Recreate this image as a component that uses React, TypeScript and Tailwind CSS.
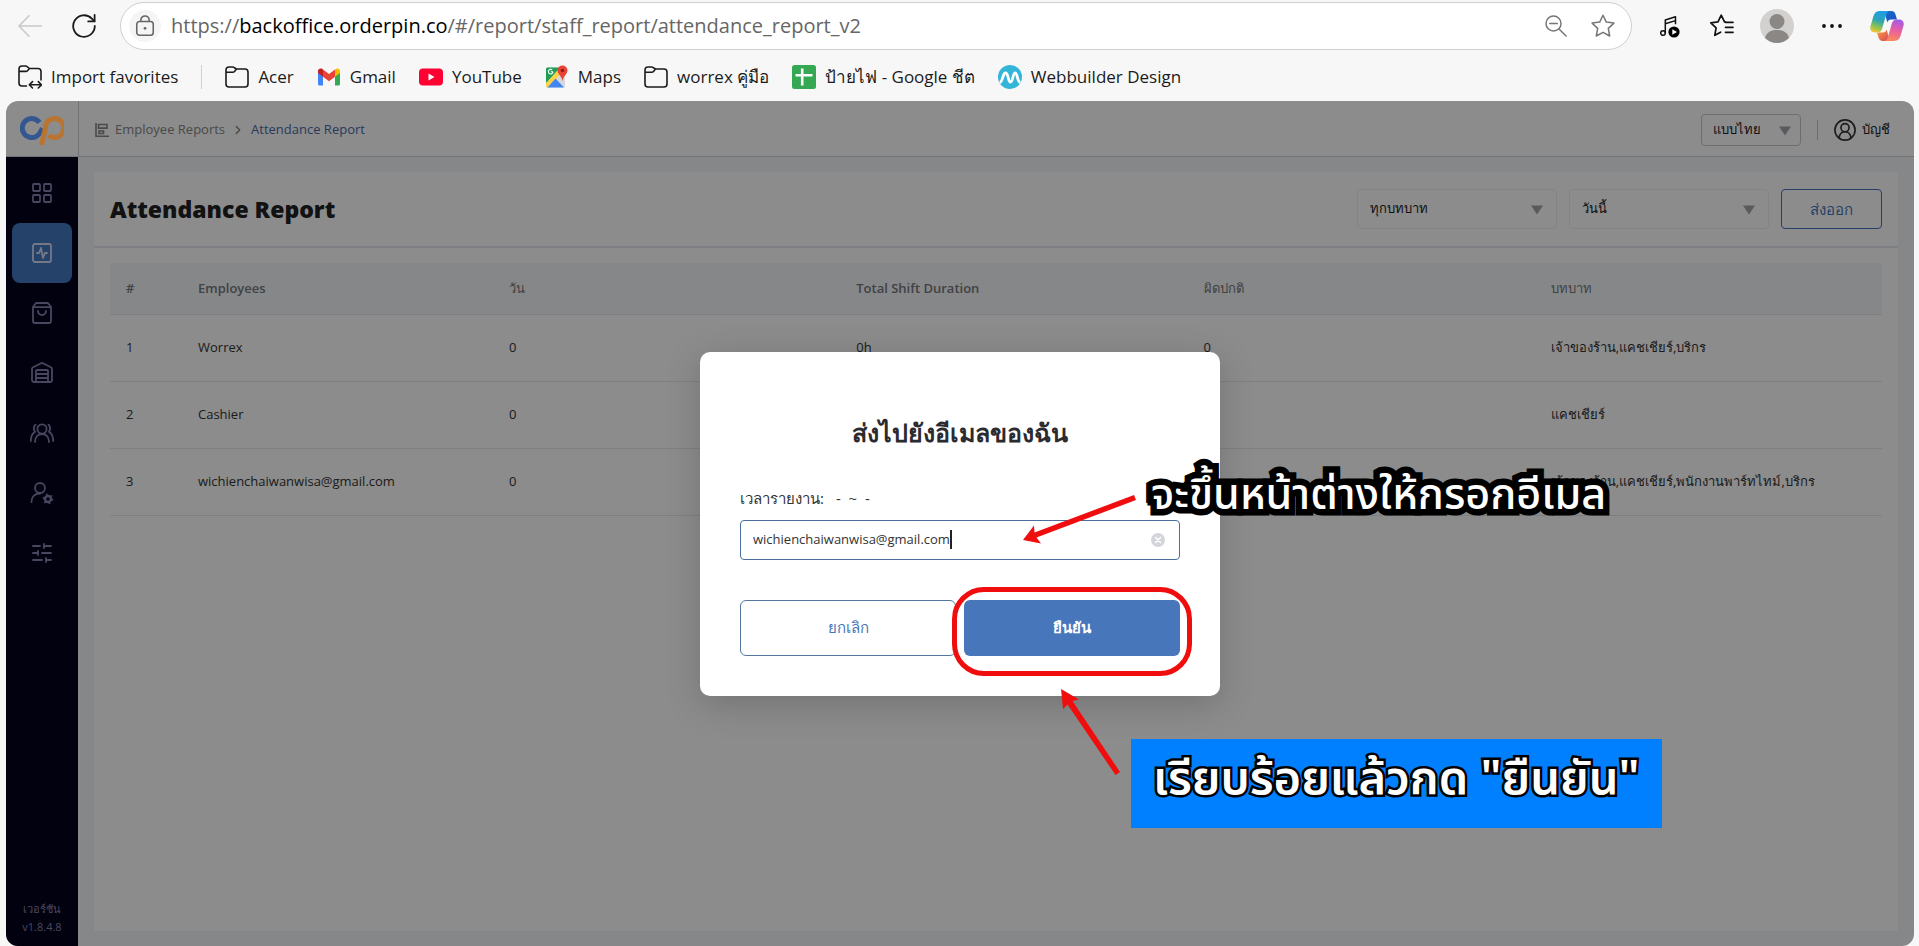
import React, { useState } from "react";
import {
  LayoutGrid,
  SquareActivity,
  ShoppingBag,
  Warehouse,
  SlidersHorizontal,
  ChevronRight,
} from "lucide-react";

/* ---------- browser icons ---------- */

const BackIcon = () => (
  <svg viewBox="0 0 24 24" className="h-6 w-6" fill="none" stroke="#c9c9c9" strokeWidth="1.6" strokeLinecap="round" strokeLinejoin="round">
    <path d="M23.5 12H1M11 1.8 1 12l10 10.2" />
  </svg>
);

const ReloadIcon = () => (
  <svg viewBox="0 0 24 24" className="h-6 w-6" fill="none" stroke="#1b1b1b" strokeWidth="1.8" strokeLinecap="round" strokeLinejoin="round">
    <path d="M22.8 12A10.8 10.8 0 1 1 19.8 4.6L22.4 7.2" />
    <path d="M22.6 1v6.4h-6.4" />
  </svg>
);

const LockIcon = () => (
  <svg viewBox="0 0 24 24" className="h-[22px] w-[22px]" fill="none" stroke="#666" strokeWidth="1.7">
    <rect x="3" y="7" width="18" height="15" rx="3" />
    <path d="M7.500 7V5.500a4.500 4.500 0 0 1 9 0V7" />
    <circle cx="12" cy="14.500" r="1.500" fill="#666" stroke="none" />
  </svg>
);

const ZoomOutIcon = () => (
  <svg viewBox="0 0 24 24" className="h-[22px] w-[22px]" fill="none" stroke="#767676" strokeWidth="1.6" strokeLinecap="round">
    <circle cx="9.3" cy="9.3" r="8.2" />
    <path d="M5.2 9.3h8.2M15.3 15.3 23 23" />
  </svg>
);

const StarIcon = () => (
  <svg viewBox="0 0 24 24" className="h-6 w-6" fill="none" stroke="#767676" strokeWidth="1.5" strokeLinejoin="round">
    <path d="m12 1.2 3.3 6.9 7.6 1-5.6 5.3 1.4 7.6-6.7-3.7-6.7 3.7 1.4-7.6L1.100 9.100l7.600-1z" />
  </svg>
);

const MusicIcon = () => (
  <svg viewBox="0 0 24 24" className="h-6 w-6" fill="none" stroke="#111" strokeWidth="1.5" strokeLinejoin="round">
    <circle cx="3" cy="19" r="2.300" />
    <path d="M5.300 19V6l10.200-3.200v7.500M5.300 9.800l10.200-3.200" />
    <circle cx="14" cy="18" r="5.600" fill="#000" stroke="none" />
    <path d="m12.300 15.300 4.700 2.700-4.700 2.700z" fill="#fff" stroke="none" />
  </svg>
);

const FavoritesIcon = () => (
  <svg viewBox="0 0 24 24" className="h-6 w-6" fill="none" stroke="#111" strokeWidth="1.700" strokeLinecap="round" strokeLinejoin="round">
    <path d="m15.500 8-1-.2L11.200 1.200 8 7.800l-7.200 1 5.300 5.100-1.300 7.400 5.800-3.100" />
    <path d="M15.500 8.300H23M15.500 13.300H23M15.500 18.300H23" />
  </svg>
);

const ProfileIcon = () => (
  <svg viewBox="0 0 34 34" className="h-[34px] w-[34px]">
    <circle cx="17" cy="17" r="17" fill="#d3d1cf" />
    <circle cx="17" cy="12.500" r="7.500" fill="#8a8785" />
    <path d="M5 29c1.500-5.500 5.500-8 12-8s10.500 2.500 12 8a17 17 0 0 1-24 0z" fill="#8a8785" />
  </svg>
);

const DotsIcon = () => (
  <svg viewBox="0 0 24 24" className="h-6 w-6" fill="#111">
    <circle cx="4" cy="12" r="1.900" />
    <circle cx="12" cy="12" r="1.900" />
    <circle cx="20" cy="12" r="1.900" />
  </svg>
);

const CopilotIcon = () => (
  <svg viewBox="0 0 34 32" className="h-8 w-[34px]">
    <defs>
      <linearGradient id="cpA" x1="0.600" y1="0" x2="0.300" y2="1">
        <stop offset="0" stopColor="#1f9be8" />
        <stop offset="0.450" stopColor="#2da5b4" />
        <stop offset="0.750" stopColor="#8cc152" />
        <stop offset="1" stopColor="#f2c62e" />
      </linearGradient>
      <linearGradient id="cpB" x1="0.600" y1="0" x2="0.400" y2="1">
        <stop offset="0" stopColor="#a45be6" />
        <stop offset="0.500" stopColor="#e8609f" />
        <stop offset="1" stopColor="#fb8b5a" />
      </linearGradient>
      <linearGradient id="cpC" x1="0" y1="0" x2="1" y2="1">
        <stop offset="0" stopColor="#1273c4" />
        <stop offset="1" stopColor="#2448c8" />
      </linearGradient>
      <linearGradient id="cpD" x1="0" y1="0" x2="1" y2="1">
        <stop offset="0" stopColor="#f7a13c" />
        <stop offset="1" stopColor="#d9415b" />
      </linearGradient>
    </defs>
    <path d="M14 1h7.500c2 0 3.300 1.200 3.900 3.200L27 9.500h-6c-2 0-3 1-3.600 3z" fill="url(#cpC)" />
    <path d="M20 31h-7.500c-2 0-3.300-1.200-3.900-3.200L7 22.500h6c2 0 3-1 3.600-3z" fill="url(#cpD)" />
    <path d="M10 1h9.500c-2 .6-2.900 2-3.600 4.500L12.300 18c-.8 3-2.300 4.500-5.300 4.500H5c-3.500 0-5.500-2.500-4.500-6.200L3.400 6.200C4.400 2.800 6.500 1 10 1z" fill="url(#cpA)" />
    <path d="M24 31h-9.500c2-.6 2.900-2 3.600-4.500L21.700 14c.8-3 2.300-4.500 5.300-4.500h2c3.500 0 5.500 2.500 4.500 6.200l-2.900 10.100c-1 3.400-3.100 5.200-6.600 5.200z" fill="url(#cpB)" />
  </svg>
);

const FolderIcon = () => (
  <svg viewBox="0 0 24 24" className="h-6 w-6 shrink-0" fill="none" stroke="#1b1b1b" strokeWidth="1.600" strokeLinejoin="round">
    <path d="M1 6.500V5a3 3 0 0 1 3-3h3.600c.7 0 1.300.3 1.800.8L11.500 4H20a3 3 0 0 1 3 3v12a3 3 0 0 1-3 3H4a3 3 0 0 1-3-3V6.500zM1 7.200h6.800c.7 0 1.200-.2 1.700-.7L11.500 4" />
  </svg>
);

const ImportIcon = () => (
  <svg viewBox="0 0 24 24" className="h-6 w-6 shrink-0" fill="none" stroke="#1b1b1b" strokeWidth="1.600" strokeLinejoin="round" strokeLinecap="round">
    <path d="M8.500 21H4a3 3 0 0 1-3-3V4a3 3 0 0 1 3-3h3.600c.7 0 1.300.3 1.800.8L11.500 3.500H20a3 3 0 0 1 3 3V15M1 6.400h6.800c.7 0 1.200-.2 1.700-.7L11.500 3.500" />
    <path d="M11.500 19.800h11.800M14.500 16.600l-3.200 3.200 3.200 3.200M20.300 16.600l3.200 3.200-3.200 3.200" />
  </svg>
);

const GmailIcon = () => (
  <svg viewBox="0 0 24 24" className="h-6 w-6 shrink-0">
    <path d="M1 6v13a1.500 1.500 0 0 0 1.500 1.500H6V10z" fill="#4285f4" />
    <path d="M23 6v13a1.500 1.500 0 0 1-1.500 1.500H18V10z" fill="#34a853" />
    <path d="M6 4.500v7.200l6 4.500 6-4.500V4.500L12 9z" fill="#ea4335" />
    <path d="M18 4.500v7.200L23 8V6c0-2.300-2.300-3.200-4-2.200z" fill="#fbbc04" />
    <path d="M6 4.500v7.200L1 8V6c0-2.300 2.300-3.200 4-2.200z" fill="#c5221f" />
  </svg>
);

const YouTubeIcon = () => (
  <svg viewBox="0 0 24 24" className="h-6 w-6 shrink-0">
    <rect x="0" y="3.500" width="24" height="17" rx="4" fill="#ff0033" />
    <path d="m9.500 8.500 6 3.500-6 3.500z" fill="#fff" />
  </svg>
);

const MapsIcon = () => (
  <svg viewBox="0 0 24 24" className="h-6 w-6 shrink-0">
    <rect x="1" y="2.500" width="19" height="20" rx="1.500" fill="#d5d8dc" />
    <path d="M2.500 2.500H15L1 19V4a1.500 1.500 0 0 1 1.500-1.500z" fill="#1e9e54" />
    <path d="M1 18 14 4l3 4L3.500 22.500h-1A1.500 1.500 0 0 1 1 21z" fill="#fbd24a" />
    <path d="m10.500 13.500 8.500 9H2.500z" fill="#4285f4" />
    <path d="m11.500 13.200 5.500-5.700 3 1.500v12.500z" fill="#d5d8dc" />
    <path d="M8 6.800H5.800M8 6.800a2.300 2.300 0 1 1-.8-1.900" fill="none" stroke="#fff" strokeWidth="1.100" />
    <path d="M17.500.500a5 5 0 0 1 5 5c0 3.500-4 5-5 10.500-1-5.500-5-7-5-10.500a5 5 0 0 1 5-5z" fill="#ea4335" />
    <circle cx="17.500" cy="5.500" r="1.800" fill="#8c1d18" />
  </svg>
);

const SheetsIcon = () => (
  <svg viewBox="0 0 24 24" className="h-6 w-6 shrink-0">
    <rect width="24" height="24" rx="2.500" fill="#34a853" />
    <path d="M10.200 3.500v17M3.500 10.200h17" stroke="#fff" strokeWidth="2.600" />
  </svg>
);

const WebbuilderIcon = () => (
  <svg viewBox="0 0 24 24" className="h-6 w-6 shrink-0">
    <circle cx="12" cy="12" r="12" fill="#33b5d9" />
    <path d="M1.500 17.500C5 17.500 4.500 8 7.500 8s2.500 9 5 9 2.200-9 4.700-9S19 17.500 22.500 17.500" fill="none" stroke="#fff" strokeWidth="2.800" strokeLinejoin="round" />
  </svg>
);

/* ---------- app icons ---------- */

const Logo = () => (
  <svg viewBox="0 0 44 30" className="h-[30px] w-11" fill="none" strokeWidth="5">
    <path d="M19.500 6.500A9.500 9.500 0 1 0 16.500 20.300C19.500 18.500 20.500 15.500 22.500 12.500" stroke="#35578f" />
    <path d="M21.500 29c1-4 1.800-8 3-12.500C25.500 12.500 25 8 28 5a9.500 9.500 0 1 1 .5 14.500" stroke="#b87430" />
  </svg>
);

const CrumbIcon = () => (
  <svg viewBox="0 0 14 14" className="h-3.5 w-3.5" fill="none" stroke="#878787" strokeWidth="1.600">
    <path d="M1 0v13.200h13M3.500 1.500h8.500v3.600H3.500zM4 8h4.500v2.500H4z" />
  </svg>
);

const TeamIcon = () => (
  <svg viewBox="0 0 24 24" className="h-6 w-6" fill="none" stroke="currentColor" strokeWidth="1.800" strokeLinecap="round">
    <circle cx="12" cy="8" r="4.600" />
    <path d="M5 21c0-5 3-8 7-8s7 3 7 8M5.500 3.600C3.600 5.500 3.500 8.500 5 10.800 2.300 12.500.8 15.800.8 20M18.500 3.600c1.900 1.900 2 4.900.5 7.200 2.700 1.700 4.200 5 4.200 9.200" />
  </svg>
);

const UserGearIcon = () => (
  <svg viewBox="0 0 24 24" className="h-6 w-6" fill="none" stroke="currentColor" strokeWidth="1.800" strokeLinecap="round">
    <circle cx="10" cy="7" r="5" />
    <path d="M1.500 21c0-5 3-8.500 8.500-8.500" />
    <circle cx="18" cy="18" r="3" strokeWidth="2.400" />
    <circle cx="18" cy="18" r="4.600" strokeWidth="1.600" strokeDasharray="1.600 3.200" strokeLinecap="butt" />
  </svg>
);

const AccountIcon = () => (
  <svg viewBox="0 0 24 24" className="h-[22px] w-[22px]" fill="none" stroke="#333" strokeWidth="1.800">
    <circle cx="12" cy="12" r="11" />
    <circle cx="12" cy="9.500" r="4.400" />
    <path d="M5.500 20.500c.6-4 3-6.600 6.500-6.600s5.900 2.600 6.500 6.600" />
  </svg>
);

const Triangle = ({ className }: { className: string }) => (
  <svg viewBox="0 0 12 11" className={`pointer-events-none absolute top-1/2 h-[11px] w-3 -translate-y-1/2 ${className}`}>
    <path d="M0 2h12L6 11z" fill="#a3a5aa" />
  </svg>
);

const bookmarks = [
  { label: "Acer", icon: <FolderIcon /> },
  { label: "Gmail", icon: <GmailIcon /> },
  { label: "YouTube", icon: <YouTubeIcon /> },
  { label: "Maps", icon: <MapsIcon /> },
  { label: "worrex คู่มือ", icon: <FolderIcon /> },
  { label: "ป้ายไฟ - Google ชีต", icon: <SheetsIcon /> },
  { label: "Webbuilder Design", icon: <WebbuilderIcon /> },
];

const navItems = [
  { id: "dashboard", icon: <LayoutGrid size={24} strokeWidth={1.8} /> },
  { id: "reports", icon: <SquareActivity size={24} strokeWidth={1.8} />, active: true },
  { id: "orders", icon: <ShoppingBag size={24} strokeWidth={1.8} /> },
  { id: "inventory", icon: <Warehouse size={24} strokeWidth={1.8} /> },
  { id: "customers", icon: <TeamIcon /> },
  { id: "staff", icon: <UserGearIcon /> },
  { id: "settings", icon: <SlidersHorizontal size={24} strokeWidth={1.8} /> },
];

const rows = [
  { n: 1, name: "Worrex", days: "0", total: "0h", abnormal: "0", role: "เจ้าของร้าน,แคชเชียร์,บริกร" },
  { n: 2, name: "Cashier", days: "0", total: "0h", abnormal: "0", role: "แคชเชียร์" },
  { n: 3, name: "wichienchaiwanwisa@gmail.com", days: "0", total: "0h", abnormal: "0", role: "เจ้าของร้าน,แคชเชียร์,พนักงานพาร์ทไทม์,บริกร" },
];

const headers = [
  { label: "#", weight: "font-semibold" },
  { label: "Employees", weight: "font-semibold" },
  { label: "วัน", weight: "font-normal" },
  { label: "Total Shift Duration", weight: "font-semibold" },
  { label: "ผิดปกติ", weight: "font-normal" },
  { label: "บทบาท", weight: "font-normal" },
];

function BrowserBar() {
  return (
    <header className="shrink-0">
      <div className="flex items-center gap-6 pt-0.5 pr-[15px] pl-[18px]">
        <div className="flex items-center gap-[30px]">
          <button aria-label="Back"><BackIcon /></button>
          <button aria-label="Reload"><ReloadIcon /></button>
        </div>
        <div className="flex h-12 flex-1 items-center rounded-full border border-[#cfcfcf] bg-white pr-4 pl-2">
          <span className="flex h-8 w-8 items-center justify-center rounded-full bg-[#f5f5f5]"><LockIcon /></span>
          <div className="ml-2.5 flex-1 text-xl text-[#666]">
            https://<span className="text-black">backoffice.orderpin.co</span>/#/report/staff_report/attendance_report_v2
          </div>
          <div className="flex items-center gap-6">
            <button aria-label="Zoom out"><ZoomOutIcon /></button>
            <button aria-label="Add to favorites"><StarIcon /></button>
          </div>
        </div>
        <div className="flex items-center gap-[26px] pl-1">
          <button aria-label="Media"><MusicIcon /></button>
          <button aria-label="Favorites"><FavoritesIcon /></button>
          <button aria-label="Profile"><ProfileIcon /></button>
          <button aria-label="More"><DotsIcon /></button>
          <button aria-label="Copilot"><CopilotIcon /></button>
        </div>
      </div>
      <nav className="flex h-[51px] items-center gap-[23px] pt-0.5 pl-[18px] text-[17px] text-[#1b1b1b]">
        <a href="#import" className="flex items-center gap-[9px]"><ImportIcon />Import favorites</a>
        <span className="h-6 w-px bg-[#d0d0d0]" />
        {bookmarks.map((b) => (
          <a key={b.label} href="#bookmark" className="flex items-center gap-[9px] whitespace-nowrap">{b.icon}{b.label}</a>
        ))}
      </nav>
    </header>
  );
}

function Sidebar() {
  return (
    <aside className="flex w-[72px] shrink-0 flex-col bg-[#04021c] pb-2.5 text-[#8482b0]">
      <nav className="flex flex-col items-center pt-1.5">
        {navItems.map((i) => (
          <a
            key={i.id}
            href={"#" + i.id}
            aria-label={i.id}
            className={`flex h-[60px] w-[60px] items-center justify-center rounded-lg ${i.active ? "bg-[#4478c2] text-[#d6dcf5]" : ""}`}
          >
            {i.icon}
          </a>
        ))}
      </nav>
      <div className="mt-auto text-center text-[11px] leading-[18px]">
        <div>เวอร์ชัน</div>
        <div>v1.8.4.8</div>
      </div>
    </aside>
  );
}

function Report() {
  return (
    <main className="flex min-w-0 flex-1 flex-col bg-[#f3f6fa] px-4 py-[15px]">
      <section className="flex-1 bg-white">
        <div className="flex h-[76px] items-center gap-3 border-b-2 border-[#e3e8ef] px-4">
          <h1 className="flex-1 text-[23px] font-extrabold text-[#222]">Attendance Report</h1>
          <div className="relative">
            <select aria-label="บทบาท" className="h-10 w-[200px] appearance-none rounded border border-[#ecf0f5] bg-white px-3 text-[13px] text-[#222]">
              <option>ทุกบทบาท</option>
            </select>
            <Triangle className="right-3.5" />
          </div>
          <div className="relative">
            <select aria-label="วัน" className="h-10 w-[200px] appearance-none rounded border border-[#ecf0f5] bg-white px-3 text-[13px] text-[#222]">
              <option>วันนี้</option>
            </select>
            <Triangle className="right-3.5" />
          </div>
          <button className="h-10 w-[101px] rounded border border-[#4776bb] text-[15px] text-[#4776bb]">ส่งออก</button>
        </div>
        <div className="px-4 pt-[15px]">
          <table className="w-full table-fixed border-collapse text-left text-[13px] text-[#333]">
            <colgroup>
              <col className="w-[72px]" />
              <col className="w-[311px]" />
              <col />
              <col />
              <col />
              <col />
            </colgroup>
            <thead>
              <tr className="h-[51px] border-b border-[#e3e8ef] bg-[#f3f6fa] text-[#76787c]">
                {headers.map((h) => (
                  <th key={h.label} className={`px-4 ${h.weight}`}>{h.label}</th>
                ))}
              </tr>
            </thead>
            <tbody>
              {rows.map((r) => (
                <tr key={r.n} className="h-[67px] border-b border-[#e3e8ef]">
                  <td className="px-4">{r.n}</td>
                  <td className="px-4">{r.name}</td>
                  <td className="px-4">{r.days}</td>
                  <td className="px-4">{r.total}</td>
                  <td className="px-4">{r.abnormal}</td>
                  <td className="px-4 whitespace-nowrap">{r.role}</td>
                </tr>
              ))}
            </tbody>
          </table>
        </div>
      </section>
    </main>
  );
}

function Arrow({ className, flip }: { className: string; flip?: boolean }) {
  return flip ? (
    <svg viewBox="0 0 60 90" className={className} fill="#f00d0d">
      <path d="M1 0 19 10.500 12.500 12 60 83 55.500 86 7.500 15.500 3 20z" />
    </svg>
  ) : (
    <svg viewBox="0 0 114 52" className={className} fill="#f00d0d">
      <path d="M0 45 11 30.500 11.500 37.500 111 0l2 5L13.500 42.500 18 48.500z" />
    </svg>
  );
}

function ExportDialog() {
  const [email, setEmail] = useState("wichienchaiwanwisa@gmail.com");
  return (
    <div role="dialog" aria-labelledby="export-title" className="relative w-[520px] rounded-[10px] bg-white px-10 pt-[60px] pb-10 shadow-[0_8px_36px_rgba(0,0,0,0.18)]">
      <h2 id="export-title" className="text-center text-[25px] leading-10 font-bold text-[#2b2b2f]">ส่งไปยังอีเมลของฉัน</h2>
      <label htmlFor="export-email" className="mt-[34px] block text-[15px] leading-6 text-[#333]">
        เวลารายงาน:<span className="ml-3">-&nbsp; ~ &nbsp;-</span>
      </label>
      <div className="mt-2.5 flex h-10 items-center rounded border border-[#4a6f9f] px-3">
        <input
          id="export-email"
          size={22}
          value={email}
          onChange={(e) => setEmail(e.target.value)}
          className="field-sizing-content text-[13px] text-[#333] outline-none"
        />
        <span className="h-[19px] w-0.5 bg-[#222]" />
        <button aria-label="Clear" className="mr-0.5 ml-auto">
          <svg viewBox="0 0 14 14" className="h-3.5 w-3.5">
            <circle cx="7" cy="7" r="7" fill="#d3d5da" />
            <path d="m4.500 4.500 5 5M9.500 4.500l-5 5" stroke="#fff" strokeWidth="1.500" strokeLinecap="round" />
          </svg>
        </button>
      </div>
      <div className="mt-10 grid grid-cols-2 gap-2">
        <button className="h-14 rounded-md border border-[#54789f] text-[15px] text-[#4776bb]">ยกเลิก</button>
        <div className="relative">
          <button className="h-14 w-full rounded-md bg-[#4776bb] text-[15px] font-bold text-white">ยืนยัน</button>
          <div className="pointer-events-none absolute -top-[13px] -right-3 -bottom-5 -left-3 rounded-[32px] border-[5px] border-[#f00d0d]" />
        </div>
      </div>

      <Arrow className="absolute top-[143px] left-[323px] h-[52px] w-[114px]" />
      <Arrow flip className="absolute top-[337px] left-[360px] h-[90px] w-[60px]" />
      <p className="absolute top-[106px] left-[451px] font-['Noto_Sans_Thai','Noto_Sans',sans-serif] text-[43px] leading-[76px] font-medium whitespace-nowrap text-white [-webkit-text-stroke:13px_#000] [paint-order:stroke_fill] [stroke-linejoin:round]">
        จะขึ้นหน้าต่างให้กรอกอีเมล
      </p>
      <p className="absolute top-[387px] left-[431px] h-[89px] bg-[#0080ff] px-[22px] font-['Noto_Sans_Thai','Noto_Sans',sans-serif] text-[47px] leading-[82px] font-semibold whitespace-nowrap text-white [-webkit-text-stroke:5px_#000] [paint-order:stroke_fill] [stroke-linejoin:round]">
        เรียบร้อยแล้วกด "ยืนยัน"
      </p>
    </div>
  );
}

export default function App() {
  return (
    <div className="flex min-h-screen flex-col overflow-hidden bg-[#f7f7f7] font-['Open_Sans','Noto_Sans',sans-serif]">
      <BrowserBar />
      <div className="relative mr-[5px] ml-1.5 flex flex-1 flex-col overflow-hidden rounded-xl bg-white">
        <div className="flex h-14 shrink-0 items-stretch border-b border-[#cdd3dc]">
          <div className="flex w-[73px] items-center justify-center border-r border-[#cdd3dc]">
            <span className="relative z-20 pt-1"><Logo /></span>
          </div>
          <div className="flex flex-1 items-center gap-1.5 pt-0.5 pl-4 text-[13px] text-[#878787]">
            <CrumbIcon />
            <a href="#reports">Employee Reports</a>
            <ChevronRight size={14} strokeWidth={2.4} />
            <a href="#attendance" className="text-[#4a6ba6]">Attendance Report</a>
          </div>
          <div className="flex items-center pt-0.5 pr-6 text-[13px] text-[#222]">
            <div className="relative">
              <select aria-label="ภาษา" className="h-8 w-[100px] appearance-none rounded border border-[#c4c7cc] bg-white px-[11px]">
                <option>แบบไทย</option>
              </select>
              <Triangle className="right-2.5" />
            </div>
            <span className="mx-4 h-5 w-px bg-[#c8c8c8]" />
            <button className="flex items-center gap-1.5"><AccountIcon />บัญชี</button>
          </div>
        </div>
        <div className="flex flex-1">
          <Sidebar />
          <Report />
        </div>
        <div className="absolute inset-0 z-10 bg-black/45" />
        <div className="absolute inset-0 z-30 flex items-center justify-center">
          <ExportDialog />
        </div>
      </div>
    </div>
  );
}
